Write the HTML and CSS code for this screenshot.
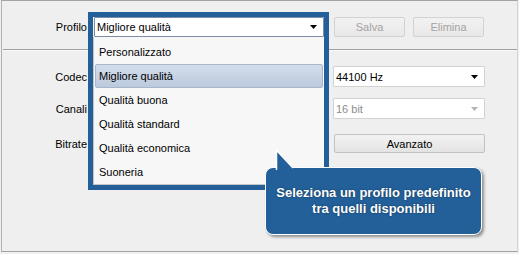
FILE: index.html
```html
<!DOCTYPE html>
<html lang="it">

<head>
    <meta charset="UTF-8">
    <meta name="viewport" content="width=device-width, initial-scale=1.0">
    <title>Profilo audio</title>
    <link rel="stylesheet" href="styles.css">
</head>

<body>
    <div class="window">
        <div class="profile-row">
            <label class="field-label">Profilo</label>
            <div class="combo profile-combo"></div>
            <button class="btn" disabled>Salva</button>
            <button class="btn" disabled>Elimina</button>
        </div>

        <div class="settings">
            <div class="settings-row">
                <label class="field-label">Codec</label>
                <div class="combo wide"></div>
                <div class="combo narrow">
                    <span>44100 Hz</span>
                    <svg class="arrow" width="7" height="4" viewBox="0 0 7 4"><path d="M0 0h7L3.5 4z" fill="#000"/></svg>
                </div>
            </div>
            <div class="settings-row">
                <label class="field-label">Canali</label>
                <div class="combo wide"></div>
                <div class="combo narrow disabled">
                    <span>16 bit</span>
                    <svg class="arrow" width="7" height="4" viewBox="0 0 7 4"><path d="M0 0h7L3.5 4z" fill="#b4b4b4"/></svg>
                </div>
            </div>
            <div class="settings-row">
                <label class="field-label">Bitrate</label>
                <div class="combo wide"></div>
                <button class="btn btn-wide">Avanzato</button>
            </div>
        </div>

        <!-- menu a tendina aperto -->
        <div class="dropdown">
            <div class="combo dropdown-combo">
                <span>Migliore qualità</span>
                <svg class="arrow" width="7" height="4" viewBox="0 0 7 4"><path d="M0 0h7L3.5 4z" fill="#000"/></svg>
            </div>
            <ul class="dropdown-list">
                <li>Personalizzato</li>
                <li class="selected">Migliore qualità</li>
                <li>Qualità buona</li>
                <li>Qualità standard</li>
                <li>Qualità economica</li>
                <li>Suoneria</li>
            </ul>
        </div>

        <!-- suggerimento -->
        <div class="tooltip">
            <svg class="tooltip-tail" width="22" height="21" viewBox="0 0 22 21">
                <path d="M1.5 21V1.2L18 19" fill="#23609a" stroke="#fff" stroke-width="1.5"/>
            </svg>
            <p>Seleziona un profilo predefinito<br>tra quelli disponibili</p>
        </div>
    </div>
</body>

</html>
```

FILE: styles.css
```css
body {
    margin: 0;
    background: #f0f0f0;
    font-family: 'Liberation Sans', 'DejaVu Sans', sans-serif;
    font-size: 11px;
    color: #000;
}

.window {
    position: relative;
    box-sizing: border-box;
    width: 517px;
    height: 252px;
    margin-left: 1px;
    border-top: 1px solid #a3a3a3;
    border-left: 1px solid #b0b0b0;
    border-bottom: 1px solid #a3a3a3;
    border-right: 1px solid #d4d4d4;
    background: #efefef;
}

.field-label {
    width: 85px;
    flex-shrink: 0;
    text-align: right;
}

.profile-row {
    display: flex;
    align-items: center;
    height: 49px;
    padding-top: 4px;
    box-sizing: border-box;
    border-bottom: 1px solid #a0a0a0;
    box-shadow: 0 1px 0 #fafafa;
    margin-left: 1px;
}

.profile-row .field-label {
    margin-left: -1px;
}

.combo {
    box-sizing: border-box;
    display: flex;
    align-items: center;
    justify-content: space-between;
    height: 21px;
    padding: 0 6px 0 2px;
    background: #fff;
    border: 1px solid #d2d2d2;
    border-radius: 1px;
}

.combo.disabled {
    color: #8c8c8c;
}

.profile-combo {
    width: 230px;
    margin-left: 8px;
}

.btn {
    box-sizing: border-box;
    height: 20px;
    width: 71px;
    padding: 0;
    font: inherit;
    color: #000;
    background: linear-gradient(#f3f3f3, #e3e3e3);
    border: 1px solid #c2c2c2;
    border-radius: 2px;
}

.btn:disabled {
    color: #a3a3a3;
    background: linear-gradient(#f2f2f2, #e8e8e8);
    border-color: #d2d2d2;
}

.profile-row .btn:first-of-type {
    margin-left: 9px;
}

.profile-row .btn + .btn {
    margin-left: 8px;
}

.settings {
    display: flex;
    flex-direction: column;
    gap: 11px;
    padding-top: 16px;
}

.settings-row {
    display: flex;
    align-items: center;
    height: 21px;
}

.settings-row:last-child {
    margin-top: 3px;
}

.settings-row .combo.wide {
    width: 233px;
    margin-left: 6px;
}

.settings-row .combo.narrow {
    width: 152px;
    margin-left: 7px;
}

.btn-wide {
    width: 151px;
    height: 19px;
    margin-left: 8px;
}

/* menu a tendina */
.dropdown {
    position: absolute;
    left: 86px;
    top: 11px;
    width: 241px;
    height: 178px;
    box-sizing: border-box;
    border: 5px solid #23609a;
    background: #f0f0f0;
}

.dropdown-combo {
    width: 230px;
    height: 20px;
    margin-left: 1px;
    border-color: #7d8ca6;
}

.dropdown-list {
    list-style: none;
    margin: 0;
    padding: 3px 1px 0 1px;
    height: 148px;
    box-sizing: border-box;
    background: #f7f7f7;
    border-left: 1px solid #c4c4c4;
    border-bottom: 1px solid #c4c4c4;
}

.dropdown-list li {
    box-sizing: border-box;
    height: 24px;
    line-height: 22px;
    padding-left: 3px;
    border: 1px solid transparent;
}

.dropdown-list li.selected {
    background: linear-gradient(#d3dcea, #bccade);
    border-color: #a7b6cb;
    border-radius: 2px;
}

/* suggerimento */
.tooltip {
    position: absolute;
    left: 263px;
    top: 166px;
    width: 217px;
    height: 68px;
    box-sizing: border-box;
    background: #23609a;
    border: 1.5px solid #fff;
    border-radius: 8px;
    box-shadow: 2px 2px 3px rgba(0, 0, 0, 0.4);
    display: flex;
    align-items: center;
    justify-content: center;
}

.tooltip-tail {
    position: absolute;
    left: 9px;
    top: -19px;
}

.tooltip p {
    margin: 0;
    color: #fff;
    font-weight: bold;
    font-size: 13px;
    line-height: 16px;
    text-align: center;
    text-shadow: 0 0 2px rgba(0, 0, 0, 0.5);
}
```
